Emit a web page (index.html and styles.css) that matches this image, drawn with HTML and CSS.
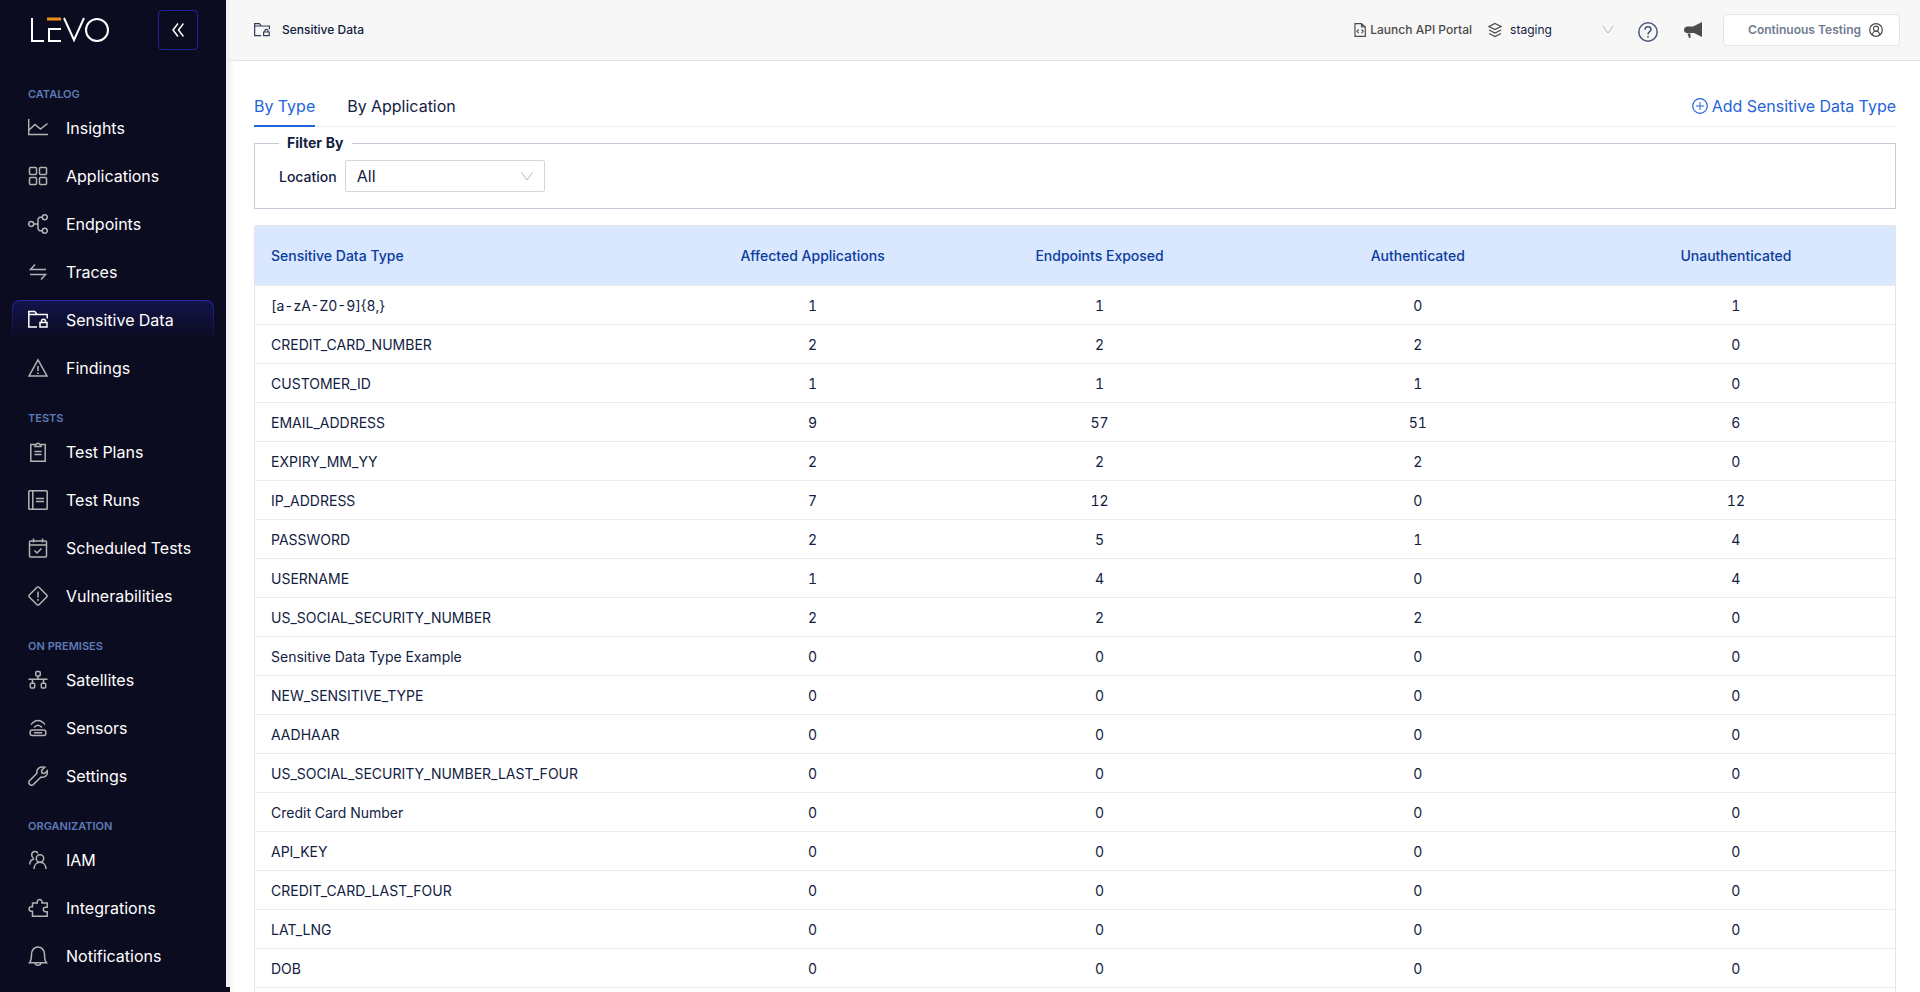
FILE: index.html
```html
<!DOCTYPE html>
<html lang="en">
<head>
    <meta charset="UTF-8">
    <meta name="viewport" content="width=device-width, initial-scale=1.0">
    <title>Levo - Sensitive Data</title>
    <link rel="stylesheet" href="styles.css">
</head>
<body>
<aside class="sidebar">
    <div class="sidebar-inner">
        <div class="brand">
            <svg class="logo" width="80" height="26" viewBox="0 0 80 26" role="img" aria-label="Levo">
                <g fill="none" stroke="#fff" stroke-width="2">
                    <path d="M2 1v23h12M31 12H19v12h12M34 1l10 22L54 1"/>
                    <circle cx="67" cy="13" r="11"/>
                </g>
                <path d="M17 2h14" stroke="#f08c1e" stroke-width="3"/>
            </svg>
            <button class="collapse" aria-label="Collapse menu">
                <svg width="12" height="14" viewBox="0 0 12 14" fill="none" stroke="#fff" stroke-width="1.5"><path d="M6 .5L1 7l5 6.500M11.500 .5L6.500 7l5 6.500"/></svg>
            </button>
        </div>
        <nav>
            <h2>Catalog</h2>
            <a href="#"><svg viewBox="0 0 20 20"><path d="M.7 1v15.500H20M1 12l6-5.500 5.500 4.500 7-5.500"/></svg>Insights</a>
            <a href="#"><svg viewBox="0 0 20 20"><rect x="1.500" y="1.500" width="7" height="7" rx="1"/><rect x="11.500" y="1.500" width="7" height="7" rx="1"/><rect x="1.500" y="11.500" width="7" height="7" rx="1"/><rect x="11.500" y="11.500" width="7" height="7" rx="1"/></svg>Applications</a>
            <a href="#"><svg viewBox="0 0 20 20"><circle cx="3.200" cy="10" r="2.500"/><circle cx="16.800" cy="3.300" r="2.500"/><circle cx="16.800" cy="16.700" r="2.500"/><path d="M5.700 10H10M14.300 3.300h-2.800L10 5v10l1.500 1.700h2.800"/></svg>Endpoints</a>
            <a href="#"><svg viewBox="0 0 20 20"><path d="M18 7.500H2.500L7 2.500M2 12.500h15.500l-4.500 5"/></svg>Traces</a>
            <a href="#" class="active"><svg viewBox="0 0 20 20"><path d="M9 17H.8V1.500h6l2.400 3h10v4M.8 4.500h8.500M12 12.500h7v4.500h-7zM13.500 12.500v-1.200a2 2 0 0 1 4 0v1.200"/></svg>Sensitive Data</a>
            <a href="#"><svg viewBox="0 0 20 20"><path d="M10 1.800L19 18H1zM10 8v5M10 14.500v1.500"/></svg>Findings</a>
            <h2>Tests</h2>
            <a href="#"><svg viewBox="0 0 20 20"><path d="M7 2.500H2.800v16.700h14.400V2.500H13M7 4.500h6V2.500h-1.200a1.900 1.900 0 0 0-3.600 0H7zM6.500 9.500h7M6.500 12.500h7"/></svg>Test Plans</a>
            <a href="#"><svg viewBox="0 0 20 20"><rect x=".8" y=".8" width="18.400" height="18.400" rx=".8"/><path d="M4.800 1v18M8 8.500h8M8 11.500h8"/></svg>Test Runs</a>
            <a href="#"><svg viewBox="0 0 20 20"><rect x="1.500" y="3" width="17" height="16" rx="1"/><path d="M1.500 7h17M5.500 .5v4M14.500 .5v4M6.500 12.500l2.500 2.500 4.500-4.500"/></svg>Scheduled Tests</a>
            <a href="#"><svg viewBox="0 0 20 20"><path d="M10 .9q.6 0 1 .4l7.700 7.700q.7 1 0 2L11 18.700q-1 .7-2 0L1.300 11q-.7-1 0-2L9 1.300q.4-.4 1-.4zM10 5.500v6M10 13v1.700"/></svg>Vulnerabilities</a>
            <h2>On Premises</h2>
            <a href="#"><svg viewBox="0 0 20 20"><rect x="7.800" y="1.500" width="4.400" height="4.400" rx="1"/><rect x="2.300" y="13.200" width="4.400" height="4.800" rx="1"/><rect x="13.300" y="13.200" width="4.400" height="4.800" rx="1"/><path d="M10 6v3.300M.5 9.300h19M4.500 9.300v4M15.500 9.300v4"/></svg>Satellites</a>
            <a href="#"><svg viewBox="0 0 20 20"><rect x="2.200" y="12" width="15.600" height="5.500" rx="2"/><path d="M6 14.700h8M3 6.500q7-8 14 0M6 9.500q4-4.500 8 0"/></svg>Sensors</a>
            <a href="#"><svg viewBox="0 0 20 20"><path d="M16.800 1.200l-3.300 3.300.5 2.500 2.500.5 2.800-2.800c.8 4-2 7.300-6.300 6.300L5 18.800C2.500 20.200-.2 17.500 1.300 15l7.600-7.800C8 3 12 0 16.800 1.200z"/></svg>Settings</a>
            <h2>Organization</h2>
            <a href="#"><svg viewBox="0 0 20 20"><circle cx="12" cy="8.500" r="3.700"/><path d="M6 19c0-9 12-9 12 0M10 3.500C8.500 .2 3.600 1.200 3.700 5c0 1.500.7 2.500 1.800 3.200M1.700 14.500q0-4.500 4.500-5.500"/></svg>IAM</a>
            <a href="#"><svg viewBox="0 0 20 20"><path d="M4.500 5h4.700V4a2.400 2.400 0 1 1 4.800 0v1h5.200v4.300h-1.700a2.200 2.200 0 0 0 0 4.400h1.700v4.500H4.500v-5H3.300a2.200 2.200 0 0 1 0-4.400h1.200z"/></svg>Integrations</a>
            <a href="#"><svg viewBox="0 0 20 20"><path d="M1.500 16.700c1.200-1.200 2-4 2-8.200 0-10 13-10 13 0 0 4.200.8 7 2 8.200zM7 17c.5 3 5.500 3 6 0"/></svg>Notifications</a>
        </nav>
    </div>
</aside>

<div class="page">
    <header class="topbar">
        <svg class="icon dark" width="16" height="16" viewBox="0 0 20 20"><path d="M9 17H.8V2h6l2.400 3h10v4M.8 5h8.500M12 12.500h7v4.500h-7zM13.500 12.500v-1.200a2 2 0 0 1 4 0v1.200"/></svg>
        <h1>Sensitive Data</h1>
        <a href="#" class="portal">
            <svg class="icon" width="12" height="14" viewBox="0 0 12 14"><path d="M1 .7h6.500L11.300 4v9.300H1zM7.500 .7V4h3.800M4.700 6.500L3 8.300l1.700 1.800M7.500 6.500l1.700 1.800-1.700 1.800"/></svg>
            Launch API Portal
        </a>
        <svg class="icon" width="14" height="16" viewBox="0 0 14 16"><path d="M7 1.500l6 3-6 3-6-3zM1 8l6 3 6-3M1 11.500l6 3 6-3"/></svg>
        <select class="environment" aria-label="Environment">
            <option>staging</option>
        </select>
        <button class="icon-button help" aria-label="Help">
            <svg class="icon slate" width="20" height="22" viewBox="0 0 20 22"><circle cx="10" cy="11" r="9.200"/><path d="M7 8.700c0-4 6-3.700 6-.3 0 2.300-3 2.200-3 5M10 15v1.800"/></svg>
        </button>
        <button class="icon-button news" aria-label="Announcements">
            <svg width="18" height="16" viewBox="0 0 18 16" fill="#4c4c4c"><path d="M18 0v15L10 11H3C-1 11-1 5 3 4.500h6zM3.500 11.500h3V16H5z"/></svg>
        </button>
        <button class="account">
            Continuous Testing
            <svg class="icon" width="14" height="14" viewBox="0 0 14 14"><circle cx="7" cy="7" r="6.300"/><circle cx="7" cy="5.700" r="2.500"/><path d="M3.500 12c0-5 7-5 7 0"/></svg>
        </button>
    </header>

    <main>
        <div class="tabs">
            <button class="tab selected">By Type</button>
            <button class="tab">By Application</button>
            <a href="#" class="add">
                <svg width="16" height="16" viewBox="0 0 16 16" fill="none" stroke="currentColor"><circle cx="8" cy="8" r="7.300" stroke-width="1.200"/><path d="M8 4v8M4 8h8"/></svg>
                Add Sensitive Data Type
            </a>
        </div>

        <fieldset>
            <legend>Filter By</legend>
            <label for="location">Location</label>
            <select id="location">
                <option>All</option>
            </select>
        </fieldset>

        <div class="table-frame">
            <table>
                <thead>
                <tr><th class="name">Sensitive Data Type</th><th class="apps">Affected Applications</th><th>Endpoints Exposed</th><th>Authenticated</th><th>Unauthenticated</th></tr>
                </thead>
                <tbody>
                <tr><td>[a-zA-Z0-9]{8,}</td><td>1</td><td>1</td><td>0</td><td>1</td></tr>
                <tr><td>CREDIT_CARD_NUMBER</td><td>2</td><td>2</td><td>2</td><td>0</td></tr>
                <tr><td>CUSTOMER_ID</td><td>1</td><td>1</td><td>1</td><td>0</td></tr>
                <tr><td>EMAIL_ADDRESS</td><td>9</td><td>57</td><td>51</td><td>6</td></tr>
                <tr><td>EXPIRY_MM_YY</td><td>2</td><td>2</td><td>2</td><td>0</td></tr>
                <tr><td>IP_ADDRESS</td><td>7</td><td>12</td><td>0</td><td>12</td></tr>
                <tr><td>PASSWORD</td><td>2</td><td>5</td><td>1</td><td>4</td></tr>
                <tr><td>USERNAME</td><td>1</td><td>4</td><td>0</td><td>4</td></tr>
                <tr><td>US_SOCIAL_SECURITY_NUMBER</td><td>2</td><td>2</td><td>2</td><td>0</td></tr>
                <tr><td>Sensitive Data Type Example</td><td>0</td><td>0</td><td>0</td><td>0</td></tr>
                <tr><td>NEW_SENSITIVE_TYPE</td><td>0</td><td>0</td><td>0</td><td>0</td></tr>
                <tr><td>AADHAAR</td><td>0</td><td>0</td><td>0</td><td>0</td></tr>
                <tr><td>US_SOCIAL_SECURITY_NUMBER_LAST_FOUR</td><td>0</td><td>0</td><td>0</td><td>0</td></tr>
                <tr><td>Credit Card Number</td><td>0</td><td>0</td><td>0</td><td>0</td></tr>
                <tr><td>API_KEY</td><td>0</td><td>0</td><td>0</td><td>0</td></tr>
                <tr><td>CREDIT_CARD_LAST_FOUR</td><td>0</td><td>0</td><td>0</td><td>0</td></tr>
                <tr><td>LAT_LNG</td><td>0</td><td>0</td><td>0</td><td>0</td></tr>
                <tr><td>DOB</td><td>0</td><td>0</td><td>0</td><td>0</td></tr>
                </tbody>
            </table>
        </div>
    </main>
</div>
</body>
</html>
```
FILE: styles.css
```css
* {
    box-sizing: border-box;
}

body {
    display: flex;
    height: 100vh;
    margin: 0;
    overflow: hidden;
    font-family: Inter, sans-serif;
    font-size: 14px;
    font-variant-numeric: tabular-nums;
    color: #12213f;
    background-color: #fff;
}

button, select {
    font: inherit;
    color: inherit;
}

button {
    cursor: pointer;
}

a {
    color: inherit;
    text-decoration: none;
}

/* sidebar */
.sidebar {
    flex: 0 0 230px;
    padding-bottom: 5px;
    background-color: #0c0c20;
}

.sidebar-inner {
    height: 100%;
    overflow: hidden;
    border-right: 4px solid #f0f0f0;
}

.brand {
    display: flex;
    justify-content: space-between;
    align-items: center;
    height: 60px;
    padding: 0 28px 0 30px;
}

.collapse {
    display: flex;
    justify-content: center;
    align-items: center;
    width: 40px;
    height: 40px;
    border: 1px solid #21239a;
    border-radius: 4px;
    background: none;
}

nav {
    display: flex;
    flex-direction: column;
    gap: 8px;
    padding: 16px 12px 0;
}

nav h2 {
    margin: 8px 0 -4px;
    padding-left: 16px;
    font-size: 11px;
    line-height: 20px;
    font-weight: 600;
    text-transform: uppercase;
    color: #5c7bb5;
}

nav h2:not(:first-child) {
    margin-top: 12px;
}

nav a {
    display: flex;
    align-items: center;
    gap: 18px;
    height: 40px;
    padding-left: 16px;
    font-size: 16px;
    color: #fff;
}

nav svg {
    width: 20px;
    height: 20px;
    fill: none;
    stroke: #b3b3b3;
    stroke-width: 1.5;
}

nav .active {
    border-radius: 8px;
    background: linear-gradient(#13144a, #0c0c20) padding-box, linear-gradient(#2528a8, #0c0c20) border-box;
    border: 1px solid transparent;
    padding-left: 15px;
}

nav .active svg {
    stroke: #fff;
}

/* content */
.page {
    flex: 1;
    display: flex;
    flex-direction: column;
    min-width: 0;
    background: linear-gradient(to right, #f5f5f5, #fff 4px);
}

.icon {
    flex: none;
    fill: none;
    stroke: #4c4c4c;
    stroke-width: 1.2;
}

.icon.dark {
    stroke: #2f3d58;
    stroke-width: 1.5;
}

.icon.slate {
    stroke: #475a78;
    stroke-width: 1.5;
}

.topbar {
    flex: none;
    display: flex;
    align-items: center;
    height: 61px;
    padding: 0 20px 1px 24px;
    border-bottom: 1px solid #e2e3e8;
    background-color: #f7f7f7;
    font-size: 12px;
}

.topbar h1 {
    margin: 0 auto 0 12px;
    font-size: 12px;
    font-weight: 500;
}

.portal {
    display: flex;
    align-items: center;
    gap: 4px;
    margin-right: 16px;
    font-weight: 500;
    color: #4c4c4c;
}

select {
    appearance: none;
    border: 1px solid #d2d5da;
    border-radius: 2px;
    background: #fff url("data:image/svg+xml,%3Csvg xmlns='http://www.w3.org/2000/svg' width='12' height='9' fill='none' stroke='%23b5b5b5'%3E%3Cpath d='M.5 .5L6 8l5.500-7.500'/%3E%3C/svg%3E") no-repeat right 11px center;
}

.environment {
    width: 112px;
    margin-left: 8px;
    padding: 0;
    border: 0;
    background-color: transparent;
    background-position: right 8px center;
}

.icon-button {
    display: flex;
    padding: 0;
    border: 0;
    background: none;
}

.help {
    margin: 4px 26px 0 16px;
}

.account {
    display: flex;
    align-items: center;
    gap: 8px;
    height: 32px;
    margin-left: 21px;
    padding: 0 16px 0 24px;
    border: 1px solid #e6e6e8;
    border-radius: 4px;
    background-color: #fff;
    font-weight: 600;
    color: #717b91;
}

main {
    flex: 1;
    display: flex;
    flex-direction: column;
    min-height: 0;
    padding: 25px 24px 0;
}

.tabs {
    flex: none;
    display: flex;
    gap: 32px;
    height: 41px;
    border-bottom: 1px solid #f0f0f0;
    font-size: 16px;
}

.tab {
    height: 41px;
    padding: 0;
    border: 0;
    border-bottom: 2px solid transparent;
    background: none;
}

.tab.selected {
    border-color: #2563d9;
    color: #2563d9;
}

.add {
    display: flex;
    align-items: center;
    gap: 4px;
    margin-left: auto;
    color: #2563d9;
}

fieldset {
    flex: none;
    display: flex;
    align-items: center;
    gap: 8px;
    margin: 5px 0 16px;
    padding: 6px 24px 16px;
    border: 1px solid #c3cbd8;
}

legend {
    padding: 0 8px;
    line-height: 22px;
    font-weight: 700;
}

label {
    font-weight: 500;
}

#location {
    width: 200px;
    height: 32px;
    padding: 0 11px;
    font-size: 16px;
}

.table-frame {
    flex: 1;
    min-height: 0;
    overflow: hidden;
    border: 1px solid #e3e5ea;
    border-bottom: 0;
    border-radius: 2px 2px 0 0;
}

table {
    width: 100%;
    table-layout: fixed;
    border-collapse: separate;
    border-spacing: 0;
}

th, td {
    height: 39px;
    padding: 0 16px;
    border-bottom: 1px solid #ebecee;
    text-align: center;
}

th {
    height: 60px;
    font-weight: 500;
    color: #0c3c9c;
    background-color: #d9e7ff;
}

th:first-child, td:first-child {
    text-align: left;
}

.name {
    width: 26.2%;
}

.apps {
    width: 15.6%;
}
```
